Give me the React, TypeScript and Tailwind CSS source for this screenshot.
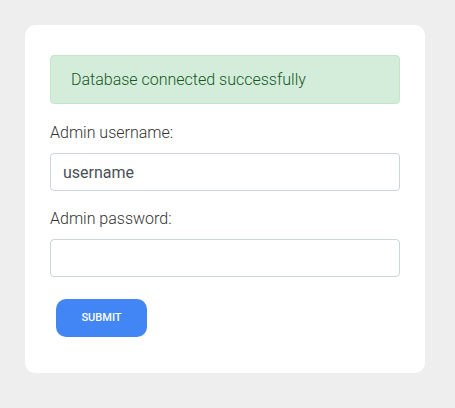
export default function App() {
  return (
    <div
      className="min-h-screen bg-[#eeeeee] p-[25px]"
      style={{ fontFamily: "Roboto, 'Liberation Sans', sans-serif" }}
    >
      <div className="w-[400px] rounded-[10px] bg-white px-[25px] pt-[30px] pb-[36px]">
        <div className="mb-[17px] h-[49px] rounded-[4px] border border-[#c3e6cb] bg-[#d4edda] px-[20px] py-[12px] text-[16px] leading-[23px] font-light text-[#155724]">
          Database connected successfully
        </div>

        <form onSubmit={(e) => e.preventDefault()}>
          <label className="mb-[8px] block text-[16px] leading-[24px] font-light text-[#333333]">
            Admin username:
          </label>
          <input
            type="text"
            defaultValue="username"
            className="mb-[16px] block h-[38px] w-full rounded-[4px] border border-[#ced4da] px-[12px] text-[16px] font-normal text-[#495057] outline-none"
          />

          <label className="mb-[8px] block text-[16px] leading-[24px] font-light text-[#333333]">
            Admin password:
          </label>
          <input
            type="password"
            className="mb-[22px] block h-[38px] w-full rounded-[4px] border border-[#ced4da] px-[12px] text-[16px] font-normal text-[#495057] outline-none"
          />

          <button
            type="submit"
            className="ml-[6px] h-[38px] w-[91px] rounded-[10px] bg-[#4285f4] text-[11px] font-medium text-white"
          >
            SUBMIT
          </button>
        </form>
      </div>
    </div>
  );
}
